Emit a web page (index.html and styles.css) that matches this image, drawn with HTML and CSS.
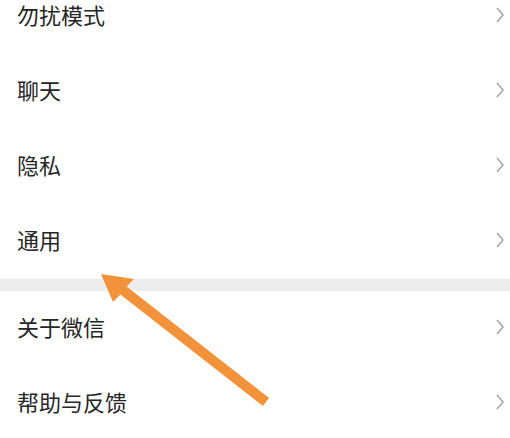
FILE: index.html
```html
<!DOCTYPE html>
<html lang="zh-CN">
<head>
<meta charset="utf-8">
<link rel="stylesheet" href="styles.css">
</head>
<body>
<div class="page">
  <ul class="group">
    <li class="row first"><span class="label">勿扰模式</span><svg class="chev" viewBox="0 0 8 16"><path d="M1 1 L7 8 L1 15"/></svg></li>
    <li class="row"><span class="label">聊天</span><svg class="chev" viewBox="0 0 8 16"><path d="M1 1 L7 8 L1 15"/></svg></li>
    <li class="row"><span class="label">隐私</span><svg class="chev" viewBox="0 0 8 16"><path d="M1 1 L7 8 L1 15"/></svg></li>
    <li class="row"><span class="label">通用</span><svg class="chev" viewBox="0 0 8 16"><path d="M1 1 L7 8 L1 15"/></svg></li>
  </ul>
  <div class="band"></div>
  <ul class="group">
    <li class="row"><span class="label">关于微信</span><svg class="chev" viewBox="0 0 8 16"><path d="M1 1 L7 8 L1 15"/></svg></li>
    <li class="row"><span class="label">帮助与反馈</span><svg class="chev" viewBox="0 0 8 16"><path d="M1 1 L7 8 L1 15"/></svg></li>
  </ul>
  <svg class="arrow" viewBox="0 0 510 438" width="510" height="438">
    <polygon points="101,274 134,279 126.6,286.6 269.1,398.1 262.9,405.9 120.4,294.4 113,302" fill="#f2923b"/>
  </svg>
</div>
</body>
</html>
```
FILE: styles.css
```css
html, body {
  margin: 0;
  padding: 0;
  background: #ffffff;
}
.page {
  position: relative;
  width: 510px;
  height: 438px;
  overflow: hidden;
  font-family: "Noto Sans CJK SC", "Noto Sans", sans-serif;
}
.group {
  list-style: none;
  margin: 0;
  padding: 0;
}
.row {
  height: 75px;
  display: flex;
  align-items: center;
  justify-content: space-between;
  padding: 0 6px 5px 17px;
  box-sizing: border-box;
}
.row.first {
  height: 54px;
  padding-bottom: 26px;
}
.label {
  font-size: 22px;
  color: #262626;
  line-height: 1;
}
.chev {
  width: 8px;
  height: 16px;
  margin-top: 1px;
}
.chev path {
  fill: none;
  stroke: #a0a0a0;
  stroke-width: 1.4;
}
.band {
  height: 12px;
  background: #ededed;
}
.arrow {
  position: absolute;
  left: 0;
  top: 0;
}
```
